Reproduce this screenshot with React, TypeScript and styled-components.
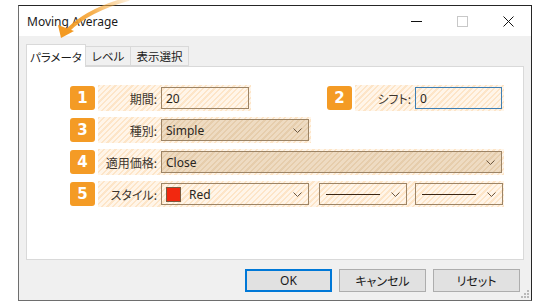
import styled, { createGlobalStyle } from 'styled-components';

const GlobalStyle = createGlobalStyle`
  html, body {
    margin: 0;
    padding: 0;
    background: #ffffff;
  }
  body {
    width: 550px;
    height: 302px;
    overflow: hidden;
    font-family: "Noto Sans", "Noto Sans CJK JP", sans-serif;
  }
`;

const palette = {
  badge: '#f49b25',
  hatchA: '#fde5c8',
  hatchB: '#fff5e9',
  darkA: '#e6cdac',
  darkB: '#eedbc2',
  ctrlBorder: '#9c8466',
  label: '#3d352e',
  panelBorder: '#d9d9d9',
  windowBg: '#f0f0f0',
};

const hatch = (a: string, b: string) =>
  `repeating-linear-gradient(135deg, ${a} 0px, ${a} 1.6px, ${b} 1.6px, ${b} 4px)`;

const jp = `
  font-family: "Noto Sans CJK JP", sans-serif;
  font-feature-settings: "palt";
`;

const Page = styled.div`
  position: relative;
  height: 302px;
  padding: 5px 0 0 18px;
  box-sizing: border-box;
`;

const Window = styled.div`
  position: relative;
  width: 514px;
  height: 296px;
  box-sizing: border-box;
  border: 1px solid #262626;
  border-left-color: #6e6e6e;
  border-bottom-color: #6e6e6e;
  background: ${palette.windowBg};
  display: flex;
  flex-direction: column;
`;

const TitleBar = styled.div`
  height: 30px;
  background: #ffffff;
  display: flex;
  align-items: center;
  padding-left: 8px;
  font-size: 12px;
  color: #1a1a1a;
`;

const Title = styled.div`
  flex: 1;
`;

const CaptionButton = styled.div`
  width: 46px;
  height: 30px;
  display: flex;
  align-items: center;
  justify-content: center;
`;

const Body = styled.div`
  flex: 1;
  display: flex;
  flex-direction: column;
  padding: 8px 7px 0 7px;
`;

const TabStrip = styled.div`
  display: flex;
  align-items: flex-end;
  height: 23px;
  position: relative;
  z-index: 1;
  margin-bottom: -1px;
`;

const Tab = styled.div<{ $active?: boolean; $width: number }>`
  box-sizing: border-box;
  width: ${p => p.$width}px;
  height: ${p => (p.$active ? '23px' : '20px')};
  padding-top: ${p => (p.$active ? '1px' : '0')};
  margin-bottom: ${p => (p.$active ? '0' : '1px')};
  border: 1px solid ${palette.panelBorder};
  border-bottom: ${p => (p.$active ? 'none' : `1px solid ${palette.panelBorder}`)};
  background: ${p => (p.$active ? '#ffffff' : palette.windowBg)};
  ${jp}
  font-size: 11.5px;
  color: #1a1a1a;
  display: flex;
  align-items: center;
  justify-content: center;
  & + & {
    border-left: none;
  }
`;

const Panel = styled.div`
  height: 194px;
  box-sizing: border-box;
  background: #ffffff;
  border: 1px solid ${palette.panelBorder};
  padding: 18px 0 0 43px;
  display: flex;
  flex-direction: column;
  gap: 6px;
`;

const Row = styled.div`
  display: flex;
  align-items: center;
  height: 26px;
`;

const Badge = styled.div<{ $offset?: number }>`
  width: 25px;
  height: 24px;
  border-radius: 3px;
  background: ${palette.badge};
  color: #ffffff;
  font-family: "DejaVu Sans", sans-serif;
  font-weight: bold;
  font-size: 15px;
  display: flex;
  align-items: center;
  justify-content: center;
  margin-left: ${p => p.$offset ?? 0}px;
  margin-right: 3px;
  flex-shrink: 0;
`;

const Field = styled.div<{ $width: number }>`
  width: ${p => p.$width}px;
  height: 26px;
  box-sizing: border-box;
  padding-right: 2px;
  background: ${hatch(palette.hatchA, palette.hatchB)};
  display: flex;
  align-items: center;
  gap: 10px;
`;

const Label = styled.div<{ $width: number }>`
  width: ${p => p.$width}px;
  flex-shrink: 0;
  text-align: right;
  ${jp}
  font-size: 12px;
  color: ${palette.label};
  margin-right: -6px;
`;

const TextBox = styled.div<{ $focused?: boolean }>`
  flex: 1;
  height: 22px;
  box-sizing: border-box;
  border: 1px solid ${p => (p.$focused ? '#3d7fb5' : palette.ctrlBorder)};
  display: flex;
  align-items: center;
  padding-left: 4px;
  font-size: 12px;
  color: #2a2520;
`;

const Select = styled.div<{ $dark?: boolean; $width?: number }>`
  ${p => (p.$width ? `width: ${p.$width}px;` : 'flex: 1;')}
  flex-shrink: 0;
  height: 22px;
  box-sizing: border-box;
  border: 1px solid ${palette.ctrlBorder};
  background: ${p => (p.$dark ? hatch(palette.darkA, palette.darkB) : 'transparent')};
  display: flex;
  align-items: center;
  padding: 0 6px 0 4px;
  gap: 8px;
  font-size: 12px;
  color: #2a2520;
`;

const SelectText = styled.div`
  flex: 1;
  display: flex;
  align-items: center;
  gap: 8px;
`;

const Swatch = styled.div`
  width: 15px;
  height: 15px;
  box-sizing: border-box;
  border: 1px solid #7a5a40;
  background: #f2280f;
`;

const LineSample = styled.div`
  flex: 1;
  height: 1px;
  background: #3b2614;
  margin: 0 3px 0 2px;
`;

const Footer = styled.div`
  display: flex;
  justify-content: flex-end;
  gap: 7px;
  padding: 9px 4px 0 0;
`;

const Button = styled.div<{ $primary?: boolean }>`
  width: 87px;
  height: 23px;
  box-sizing: border-box;
  border: ${p => (p.$primary ? '2px solid #0078d7' : '1px solid #adadad')};
  background: #e1e1e1;
  display: flex;
  align-items: center;
  justify-content: center;
  font-family: "Noto Sans", "Noto Sans CJK JP", sans-serif;
  font-feature-settings: "palt";
  font-size: 12px;
  color: #1a1a1a;
`;

const Grip = styled.svg`
  position: absolute;
  right: 2px;
  bottom: 2px;
`;

const Arrow = styled.svg`
  position: absolute;
  left: 0;
  top: 0;
  pointer-events: none;
`;

const Chevron = () => (
  <svg width="9" height="5" viewBox="0 0 9 5">
    <polyline points="0.5,0.5 4.5,4.5 8.5,0.5" fill="none" stroke="#6d5a46" strokeWidth="1" />
  </svg>
);

export default function App() {
  return (
    <Page>
      <GlobalStyle />
      <Window>
        <TitleBar>
          <Title>Moving Average</Title>
          <CaptionButton>
            <svg width="11" height="1">
              <rect width="11" height="1" fill="#111" />
            </svg>
          </CaptionButton>
          <CaptionButton>
            <svg width="11" height="11">
              <rect x="0.5" y="0.5" width="10" height="10" fill="none" stroke="#c8c8c8" />
            </svg>
          </CaptionButton>
          <CaptionButton>
            <svg width="11" height="11">
              <path d="M0.5 0.5 L10.5 10.5 M10.5 0.5 L0.5 10.5" stroke="#111" strokeWidth="1" />
            </svg>
          </CaptionButton>
        </TitleBar>
        <Body>
          <TabStrip>
            <Tab $active $width={60}>パラメータ</Tab>
            <Tab $width={45}>レベル</Tab>
            <Tab $width={58}>表示選択</Tab>
          </TabStrip>
          <Panel>
            <Row>
              <Badge>1</Badge>
              <Field $width={153}>
                <Label $width={59}>期間:</Label>
                <TextBox>20</TextBox>
              </Field>
              <Badge $offset={76}>2</Badge>
              <Field $width={149}>
                <Label $width={56}>シフト:</Label>
                <TextBox $focused>0</TextBox>
              </Field>
            </Row>
            <Row>
              <Badge>3</Badge>
              <Field $width={213}>
                <Label $width={59}>種別:</Label>
                <Select $dark>
                  <SelectText>Simple</SelectText>
                  <Chevron />
                </Select>
              </Field>
            </Row>
            <Row>
              <Badge>4</Badge>
              <Field $width={406}>
                <Label $width={59}>適用価格:</Label>
                <Select $dark>
                  <SelectText>Close</SelectText>
                  <Chevron />
                </Select>
              </Field>
            </Row>
            <Row>
              <Badge>5</Badge>
              <Field $width={406}>
                <Label $width={59}>スタイル:</Label>
                <Select $width={148}>
                  <SelectText>
                    <Swatch />
                    Red
                  </SelectText>
                  <Chevron />
                </Select>
                <Select $width={88}>
                  <LineSample />
                  <Chevron />
                </Select>
                <Select $width={88} style={{ marginLeft: -2 }}>
                  <LineSample />
                  <Chevron />
                </Select>
              </Field>
            </Row>
          </Panel>
          <Footer>
            <Button $primary>OK</Button>
            <Button>キャンセル</Button>
            <Button>リセット</Button>
          </Footer>
        </Body>
        <Grip width="8" height="8" viewBox="0 0 8 8">
          <rect x="6" y="0" width="2" height="2" fill="#b8b8b8" />
          <rect x="3" y="3" width="2" height="2" fill="#b8b8b8" />
          <rect x="6" y="3" width="2" height="2" fill="#b8b8b8" />
          <rect x="0" y="6" width="2" height="2" fill="#b8b8b8" />
          <rect x="3" y="6" width="2" height="2" fill="#b8b8b8" />
          <rect x="6" y="6" width="2" height="2" fill="#b8b8b8" />
        </Grip>
      </Window>
      <Arrow width="140" height="45" viewBox="0 0 140 45">
        <defs>
          <linearGradient id="arrowFade" x1="130" y1="0" x2="62" y2="36" gradientUnits="userSpaceOnUse">
            <stop offset="0" stopColor="#f7b04a" stopOpacity="0.2" />
            <stop offset="0.5" stopColor="#f5a332" stopOpacity="0.85" />
            <stop offset="1" stopColor="#f39a22" />
          </linearGradient>
        </defs>
        <path d="M128 -1 Q 88 10 68 30" fill="none" stroke="url(#arrowFade)" strokeWidth="4" strokeLinecap="round" />
        <polygon points="61,38 58,25 74,31" fill="#f39a22" />
      </Arrow>
    </Page>
  );
}
